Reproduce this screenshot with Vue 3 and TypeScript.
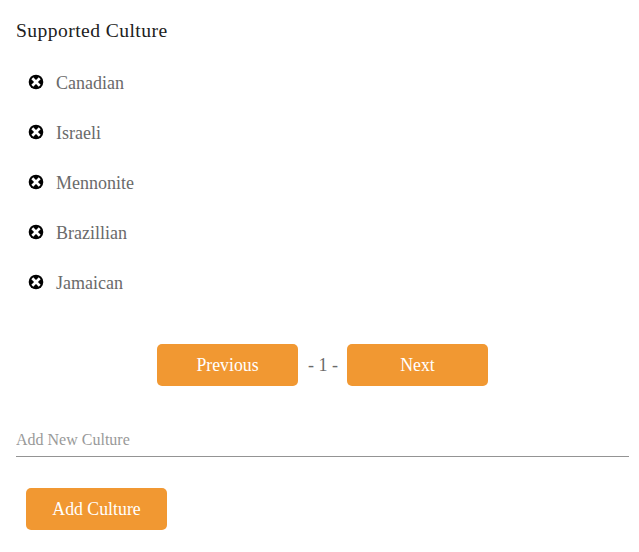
<script setup lang="ts">
import { ref } from 'vue'

const cultures = ref<string[]>(['Canadian', 'Israeli', 'Mennonite', 'Brazillian', 'Jamaican'])
const page = ref<number>(1)
const newCulture = ref<string>('')

function removeCulture(index: number): void {
  cultures.value.splice(index, 1)
}

function addCulture(): void {
  const name = newCulture.value.trim()
  if (name) {
    cultures.value.push(name)
    newCulture.value = ''
  }
}
</script>

<template>
  <main class="panel">
    <h1 class="title">Supported Culture</h1>
    <ul class="list">
      <li v-for="(culture, index) in cultures" :key="culture" class="item">
        <button class="remove" type="button" @click="removeCulture(index)">
          <svg class="icon" viewBox="0 0 16 16">
            <circle cx="8" cy="8" r="7.3" fill="#000" />
            <path d="M4.3 4.3l7.4 7.4M11.7 4.3l-7.4 7.4" stroke="#fff" stroke-width="2.7" />
          </svg>
        </button>
        <span class="name">{{ culture }}</span>
      </li>
    </ul>
    <nav class="pager">
      <button class="btn" type="button" @click="page = Math.max(1, page - 1)">Previous</button>
      <span class="page">- {{ page }} -</span>
      <button class="btn" type="button" @click="page++">Next</button>
    </nav>
    <form class="form" @submit.prevent="addCulture">
      <input v-model="newCulture" class="input" type="text" placeholder="Add New Culture" />
      <button class="btn add" type="submit">Add Culture</button>
    </form>
  </main>
</template>

<style>
body {
  background: #fff;
}
</style>

<style scoped>
.panel {
  box-sizing: border-box;
  height: 552px;
  padding: 19px 10px 0 16px;
  overflow: hidden;
  font-family: 'Liberation Serif', 'Times New Roman', serif;
  font-size: 18px;
  color: #6a6a6a;
}
.title {
  margin: 0;
  font-size: 19.6px;
  line-height: 24px;
  font-weight: 400;
  letter-spacing: 0.43px;
  color: #212121;
}
.list {
  margin: 15px 0 0;
  padding: 0;
  list-style: none;
}
.item {
  display: flex;
  align-items: center;
  height: 50px;
  padding-left: 12px;
}
.remove {
  display: flex;
  margin: 0 12px 2px 0;
  padding: 0;
  border: 0;
  background: none;
}
.icon {
  width: 16px;
  height: 16px;
}
.name {
  padding-top: 1px;
}
.pager {
  display: flex;
  align-items: center;
  gap: 10px;
  margin: 36px 0 0 141px;
}
.page {
  width: 29px;
  white-space: nowrap;
}
.btn {
  width: 141px;
  height: 42px;
  padding: 0;
  border: 0;
  border-radius: 5px;
  background: #f19832;
  color: #fff;
  font: inherit;
  font-size: 17.8px;
}
.form {
  display: flex;
  flex-direction: column;
  margin-top: 37px;
}
.input {
  box-sizing: border-box;
  width: 100%;
  height: 34px;
  padding: 0;
  border: 0;
  border-bottom: 1px solid #949494;
  outline: 0;
  font: inherit;
  font-size: 16px;
}
.input::placeholder {
  color: #999;
}
.add {
  margin: 31px 0 0 10px;
}
</style>
